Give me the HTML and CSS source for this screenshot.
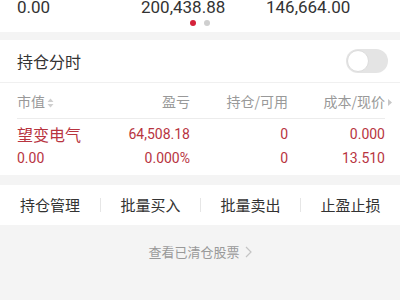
FILE: index.html
```html
<!DOCTYPE html>
<html lang="zh">
<head>
<meta charset="utf-8">
<link rel="stylesheet" href="styles.css">
</head>
<body>
<div class="summary">
  <div class="values">
    <span>0.00</span>
    <span>200,438.88</span>
    <span>146,664.00</span>
  </div>
  <div class="dots"><i class="dot on"></i><i class="dot"></i></div>
</div>

<div class="card">
  <div class="switch-row">
    <span class="switch-label">持仓分时</span>
    <span class="toggle"><i class="knob"></i></span>
  </div>
  <div class="table-head">
    <span class="c1">市值<svg class="sort" width="7" height="10" viewBox="0 0 7 10"><path d="M3.5 0.5 L6.5 4 H0.5 Z M3.5 9.5 L6.5 6 H0.5 Z" fill="#cfcfcf"/></svg></span>
    <span class="c2">盈亏</span>
    <span class="c3">持仓/可用</span>
    <span class="c4">成本/现价<svg class="tri" width="4" height="7" viewBox="0 0 4 7"><path d="M0 0 L4 3.5 L0 7 Z" fill="#c8c8c8"/></svg></span>
  </div>
  <div class="stock">
    <span class="c1 name">望变电气</span>
    <span class="c2">64,508.18</span>
    <span class="c3">0</span>
    <span class="c4">0.000</span>
    <span class="c1">0.00</span>
    <span class="c2">0.000%</span>
    <span class="c3">0</span>
    <span class="c4">13.510</span>
  </div>
</div>

<div class="actions">
  <span class="act">持仓管理</span>
  <span class="act">批量买入</span>
  <span class="act">批量卖出</span>
  <span class="act">止盈止损</span>
</div>

<div class="cleared">查看已清仓股票<svg class="chev" width="7" height="12" viewBox="0 0 7 12"><path d="M1 1 L6 6 L1 11" fill="none" stroke="#c4c4c4" stroke-width="1.2"/></svg></div>
</body>
</html>
```

FILE: styles.css
```css
* { box-sizing: border-box; }
html, body { margin: 0; padding: 0; }
body {
  width: 400px;
  height: 300px;
  overflow: hidden;
  background: #f4f4f4;
  font-family: Roboto, "Noto Sans CJK SC", sans-serif;
  color: #333;
}
.summary {
  background: #fff;
  height: 32px;
  overflow: hidden;
}
.values {
  display: grid;
  grid-template-columns: 124px 125px 124px;
  padding-left: 17px;
  font-size: 17px;
  line-height: 18px;
  margin-top: -2px;
  color: #333;
}
.dots {
  display: flex;
  justify-content: center;
  gap: 8px;
  margin-top: 4px;
}
.dot {
  width: 6px;
  height: 6px;
  border-radius: 50%;
  background: #cfcfcf;
}
.dot.on { background: #d5223a; }

.card {
  background: #fff;
  margin-top: 8px;
}
.switch-row {
  height: 43px;
  display: flex;
  align-items: center;
  justify-content: space-between;
  padding: 0 12px 0 17px;
  border-bottom: 1px solid #f0f0f0;
}
.switch-label {
  font-size: 16px;
  color: #333;
  font-family: "Noto Sans CJK SC", sans-serif;
}
.toggle {
  width: 42px;
  height: 24px;
  border-radius: 12px;
  background: #e4e4e4;
  display: flex;
  align-items: center;
  padding-left: 1px;
}
.knob {
  width: 22px;
  height: 22px;
  border-radius: 50%;
  background: #fff;
  border: 1px solid #dcdcdc;
}
.table-head, .stock {
  display: grid;
  grid-template-columns: 80px 93px 98px 97px;
  margin: 0 15px 0 17px;
}
.table-head {
  height: 36px;
  align-items: center;
  font-size: 14px;
  color: #999;
  font-family: "Noto Sans CJK SC", sans-serif;
  border-bottom: 1px solid #ececec;
}
.c2, .c3, .c4 { text-align: right; }
.sort { margin-left: 2px; vertical-align: -1px; }
.tri { margin-right: -7px; margin-left: 3px; vertical-align: 1px; }
.stock {
  padding: 3px 0 5px;
  font-size: 14px;
  line-height: 24px;
  color: #b8343f;
}
.stock .name {
  font-size: 16px;
  font-family: "Noto Sans CJK SC", sans-serif;
}
.actions {
  margin-top: 10px;
  background: #fff;
  height: 40px;
  display: grid;
  grid-template-columns: repeat(4, 1fr);
  align-items: center;
}
.act {
  text-align: center;
  font-size: 15px;
  color: #333;
  font-family: "Noto Sans CJK SC", sans-serif;
  border-left: 1px solid #e6e6e6;
  line-height: 14px;
}
.act:first-child { border-left: none; }
.cleared {
  text-align: center;
  margin-top: 17px;
  font-size: 13px;
  color: #999;
  font-family: "Noto Sans CJK SC", sans-serif;
}
.chev { margin-left: 5px; vertical-align: -1px; }
```
